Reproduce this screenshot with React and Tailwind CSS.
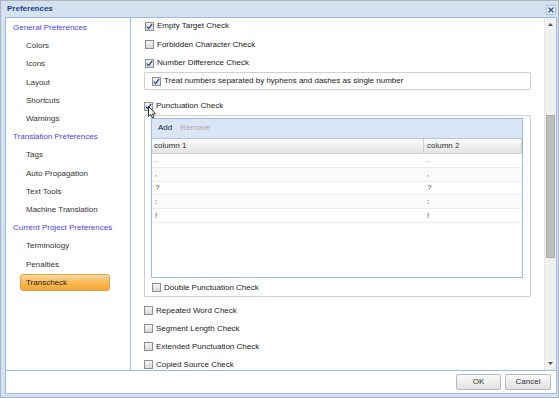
import React from "react";

function Cb({ checked }) {
  return (
    <span className="w-[9px] h-[9px] border border-[#8e8f8f] bg-linear-to-b from-[#f3f3f3] to-[#d9d9d9] flex items-center justify-center shrink-0">
      {checked && (
        <svg width="7" height="7" viewBox="0 0 7 7">
          <path d="M0.8 3.6 L2.7 5.6 L6.2 0.9" stroke="#26479a" strokeWidth="1.3" fill="none" />
        </svg>
      )}
    </span>
  );
}

function Row({ checked, label, className = "" }) {
  return (
    <div className={"flex items-center h-[13px] gap-[3px] text-[#222] shrink-0 " + className}>
      <Cb checked={checked} />
      <span className="leading-none">{label}</span>
    </div>
  );
}

const nav = [
  { t: "General Preferences", h: true },
  { t: "Colors" },
  { t: "Icons" },
  { t: "Layout" },
  { t: "Shortcuts" },
  { t: "Warnings" },
  { t: "Translation Preferences", h: true },
  { t: "Tags" },
  { t: "Auto Propagation" },
  { t: "Text Tools" },
  { t: "Machine Translation" },
  { t: "Current Project Preferences", h: true },
  { t: "Terminology" },
  { t: "Penalties" },
  { t: "Transcheck", sel: true },
];

const rows = [".", ",", "?", ":", "!"];

export default function App() {
  return (
    <div className="w-[559px] h-[398px] bg-[#d5e1ef] border border-[#aab6c4] flex flex-col font-['Liberation_Sans',Arial,sans-serif] text-[8px] overflow-hidden">
      {/* title bar */}
      <div className="h-[16px] flex items-center justify-between pl-[6px] pr-[2px] shrink-0">
        <span className="font-bold text-[#15428b] leading-none">Preferences</span>
        <span className="w-[10px] h-[10px] border border-[#a9c0dd] bg-[#eef3fa] rounded-[1px] flex items-center justify-center mt-[1px]">
          <svg width="6" height="6" viewBox="0 0 6 6">
            <path d="M0.5 0.5 L5.5 5.5 M5.5 0.5 L0.5 5.5" stroke="#2b5aa8" strokeWidth="1.4" />
          </svg>
        </span>
      </div>
      {/* body */}
      <div className="flex-1 ml-[4px] mr-[1px] mb-[3px] border border-[#99bbe8] bg-white flex flex-col min-h-0">
        <div className="flex-1 flex min-h-0">
          {/* left nav */}
          <div className="w-[125px] border-r border-[#99bbe8] shrink-0 pt-[1px]">
            {nav.map((n) =>
              n.sel ? (
                <div key={n.t} className="h-[18.2px] flex items-center">
                  <div className="ml-[14px] w-[90px] h-[17px] rounded-[3px] border border-[#dca24a] bg-linear-to-b from-[#fcd9a0] via-[#f8ba55] to-[#f4a833] flex items-center pl-[5px] text-[#1e1e1e]">
                    {n.t}
                  </div>
                </div>
              ) : (
                <div
                  key={n.t}
                  className={
                    "h-[18.2px] flex items-center " +
                    (n.h ? "pl-[7px] text-[#4b3fef]" : "pl-[20px] text-[#333]")
                  }
                >
                  {n.t}
                </div>
              )
            )}
          </div>
          {/* right */}
          <div className="flex-1 flex min-w-0 relative">
            <div className="flex-1 overflow-hidden flex flex-col pt-[1.5px]">
              <Row checked label="Empty Target Check" className="ml-[14px]" />
              <Row label="Forbidden Character Check" className="ml-[14px] mt-[5.5px]" />
              <Row checked label="Number Difference Check" className="ml-[14px] mt-[5.5px]" />
              <div className="mx-[13px] mt-[2.5px] h-[18px] border border-[#d0d0d0] rounded-[1px] flex items-center pl-[7px] shrink-0">
                <Row checked label="Treat numbers separated by hyphens and dashes as single number" />
              </div>
              <Row checked label="Punctuation Check" className="ml-[13px] mt-[9.5px]" />
              <div className="mx-[13px] mt-[2.5px] border border-[#d0d0d0] rounded-[1px] pt-[2px] pl-[6px] pr-[7px] pb-[1.5px] shrink-0">
                <div className="h-[160px] border border-[#99bbe8] flex flex-col">
                  <div className="h-[19.5px] bg-[#dae6f5] border-b border-[#a9c5ea] flex items-center pl-[6px] gap-[8px] shrink-0">
                    <span className="text-[#222]">Add</span>
                    <span className="text-[#a8a8a8]">Remove</span>
                  </div>
                  <div className="h-[15.5px] flex bg-linear-to-b from-[#fbfbfb] to-[#e4e4e4] border-b border-[#cfcfcf] text-[#333] shrink-0">
                    <div className="w-[272px] pl-[2px] flex items-center border-r border-[#d0d0d0]">column 1</div>
                    <div className="flex-1 pl-[3px] flex items-center border-r border-[#d0d0d0]">column 2</div>
                  </div>
                  {rows.map((r, i) => (
                    <div
                      key={i}
                      className={
                        "h-[13.8px] flex border-b border-[#ececec] text-[#444] shrink-0 " +
                        (i % 2 === 1 ? "bg-[#fafafa]" : "bg-white")
                      }
                    >
                      <div className="w-[272px] pl-[3px] flex items-center">{r}</div>
                      <div className="flex-1 pl-[3px] flex items-center">{r}</div>
                    </div>
                  ))}
                </div>
                <Row label="Double Punctuation Check" className="mt-[3px] ml-[1px]" />
              </div>
              <Row label="Repeated Word Check" className="ml-[13px] mt-[7.5px]" />
              <Row label="Segment Length Check" className="ml-[13px] mt-[5px]" />
              <Row label="Extended Punctuation Check" className="ml-[13px] mt-[5px]" />
              <Row label="Copied Source Check" className="ml-[13px] mt-[5px]" />
            </div>
            {/* scrollbar */}
            <div className="w-[12px] bg-[#f0f0f0] border-l border-[#e6e6e6] flex flex-col shrink-0">
              <div className="h-[13px] flex items-center justify-center">
                <svg width="5" height="3" viewBox="0 0 5 3"><path d="M0 3 L2.5 0 L5 3 Z" fill="#555" /></svg>
              </div>
              <div className="flex-1 pt-[84px] pl-[1px]">
                <div className="w-[9px] h-[143px] bg-[#bdbdbd] border border-[#aaaaaa]" />
              </div>
              <div className="h-[13px] flex items-center justify-center">
                <svg width="5" height="3" viewBox="0 0 5 3"><path d="M0 0 L5 0 L2.5 3 Z" fill="#555" /></svg>
              </div>
            </div>
            {/* cursor */}
            <svg className="absolute left-[17px] top-[88px]" width="9" height="13" viewBox="0 0 9 13">
              <path d="M0.5 0.5 L0.5 10.5 L2.8 8.4 L4.4 12 L5.9 11.3 L4.4 7.9 L7.5 7.9 Z" fill="#fff" stroke="#000" strokeWidth="0.8" strokeLinejoin="round" />
            </svg>
          </div>
        </div>
        {/* footer */}
        <div className="h-[23px] border-t border-[#99bbe8] flex items-center justify-end gap-[4px] pr-[5px] shrink-0">
          <div className="w-[45px] h-[16px] rounded-[2px] border border-[#b8b8b8] bg-linear-to-b from-[#fafafa] to-[#e2e2e2] flex items-center justify-center text-[#333]">OK</div>
          <div className="w-[46px] h-[16px] rounded-[2px] border border-[#b8b8b8] bg-linear-to-b from-[#fafafa] to-[#e2e2e2] flex items-center justify-center text-[#333]">Cancel</div>
        </div>
      </div>
    </div>
  );
}
